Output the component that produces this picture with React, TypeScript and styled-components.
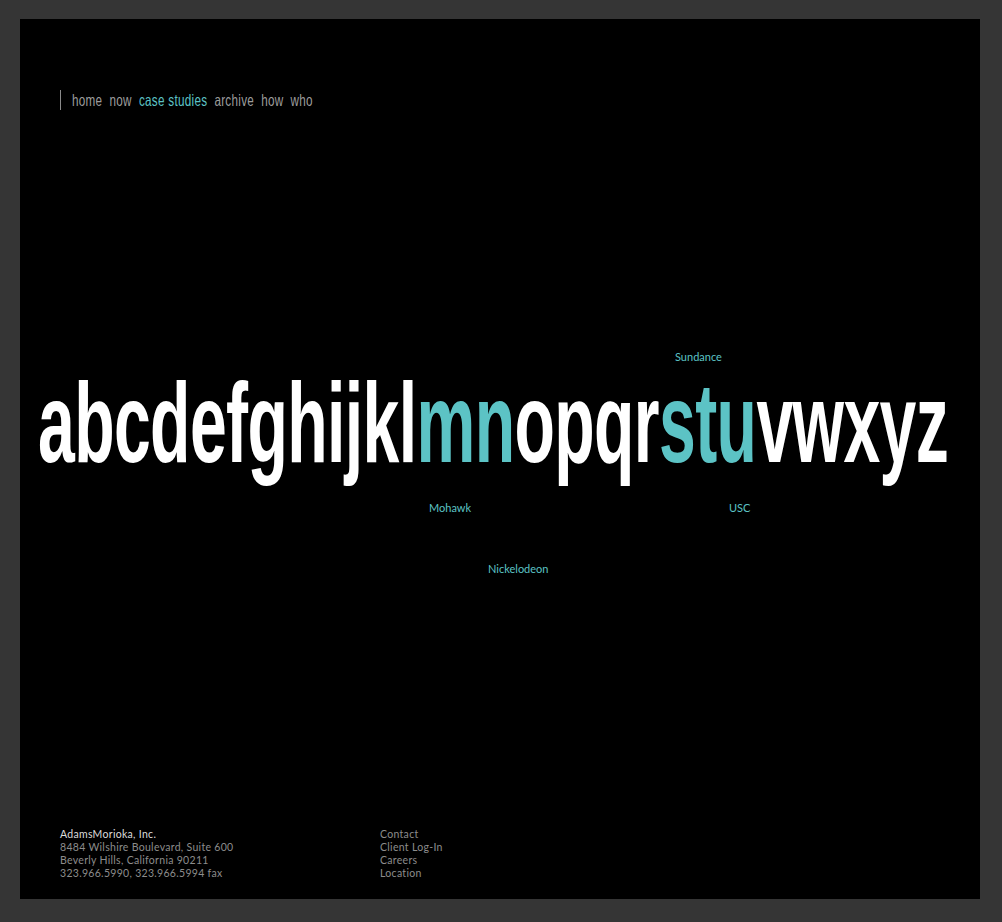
import * as React from "react";
import styled, { createGlobalStyle } from "styled-components";

const colors = {
  frame: "#353535",
  panel: "#000000",
  teal: "#5cc3c5",
  navGray: "#9d9d9d",
  white: "#ffffff",
  footLight: "#dcdcdc",
  footGray: "#8c8c8c",
};

const GlobalStyle = createGlobalStyle`
  html, body {
    margin: 0;
    padding: 0;
    background: ${colors.frame};
  }
  body {
    font-family: "Lato", "Liberation Sans", sans-serif;
  }
`;

const Frame = styled.div`
  padding: 19px 22px 23px 20px;
`;

const Panel = styled.div`
  /* the black sheet */
  background: ${colors.panel};
  width: 960px;
  height: 880px;
  display: flex;
  flex-direction: column;
  overflow: hidden;
`;

const Nav = styled.nav`
  display: flex;
  align-items: center;
  height: 20px;
  margin: 71px 0 0 40px;
`;

const NavBar = styled.span`
  width: 1px;
  height: 20px;
  background: #8a8a8a;
  margin-right: 11px;
`;

const NavLinks = styled.div`
  display: flex;
  align-items: center;
  gap: 10px;
  white-space: nowrap;
  transform-origin: left center;
`;

const NavLink = styled.a<{ active?: boolean }>`
  font-family: "Liberation Sans", sans-serif;
  font-size: 16.5px;
  line-height: 20px;
  letter-spacing: 0.4px;
  color: ${(p) => (p.active ? colors.teal : colors.navGray)};
  text-decoration: none;
  cursor: pointer;
`;

const Stage = styled.div`
  flex: 1;
  position: relative;
`;

const Alphabet = styled.div`
  margin: 268px 0 0 18px;
  height: 90px;
  line-height: 90px;
  white-space: nowrap;
`;

const Letters = styled.span`
  display: inline-block;
  font-family: "Liberation Sans Narrow", "Liberation Sans", sans-serif;
  font-weight: 700;
  font-size: 114px;
  letter-spacing: -1px;
  color: ${colors.white};
  transform-origin: left center;
`;

const Hi = styled.span`
  color: ${colors.teal};
`;

const Client = styled.a<{ x: number; y: number }>`
  position: absolute;
  left: ${(p) => p.x}px;
  top: ${(p) => p.y}px;
  font-family: "Lato", "Liberation Sans", sans-serif;
  font-size: 11px;
  line-height: 14px;
  color: ${colors.teal};
  text-decoration: none;
  cursor: pointer;
`;

const Footer = styled.footer`
  display: flex;
  padding: 0 0 19px 40px;
`;

const FootCol = styled.div<{ width?: number }>`
  width: ${(p) => (p.width ? `${p.width}px` : "auto")};
  display: flex;
  flex-direction: column;
`;

const FootLine = styled.span<{ strong?: boolean }>`
  font-family: "Lato", "Liberation Sans", sans-serif;
  font-size: 10.5px;
  line-height: 13px;
  letter-spacing: 0.3px;
  color: ${(p) => (p.strong ? colors.footLight : colors.footGray)};
  white-space: nowrap;
`;

const navItems = ["home", "now", "case studies", "archive", "how", "who"];

const clients = [
  { name: "Sundance", x: 655, y: 240 },
  { name: "Mohawk", x: 409, y: 391 },
  { name: "USC", x: 709, y: 391 },
  { name: "Nickelodeon", x: 468, y: 452 },
];

// squeeze an element horizontally until it spans the given width
function useFitWidth<T extends HTMLElement>(target: number) {
  const ref = React.useRef<T>(null);
  const [scale, setScale] = React.useState(1);
  React.useLayoutEffect(() => {
    if (ref.current) {
      const w = ref.current.offsetWidth;
      if (w > 0) setScale(target / w);
    }
  }, [target]);
  return [ref, scale] as const;
}

export default function App() {
  const [lettersRef, lettersScale] = useFitWidth<HTMLSpanElement>(910);
  const [navRef, navScale] = useFitWidth<HTMLDivElement>(241);

  return (
    <>
      <GlobalStyle />
      <Frame>
        <Panel>
          <Nav>
            <NavBar />
            <NavLinks ref={navRef} style={{ transform: `scaleX(${navScale})` }}>
              {navItems.map((item) => (
                <NavLink key={item} active={item === "case studies"}>
                  {item}
                </NavLink>
              ))}
            </NavLinks>
          </Nav>
          <Stage>
            <Alphabet>
              <Letters ref={lettersRef} style={{ transform: `scaleX(${lettersScale})` }}>
                abcdefghijkl<Hi>mn</Hi>opqr<Hi>stu</Hi>vwxyz
              </Letters>
            </Alphabet>
            {clients.map((c) => (
              <Client key={c.name} x={c.x} y={c.y}>
                {c.name}
              </Client>
            ))}
          </Stage>
          <Footer>
            <FootCol width={320}>
              <FootLine strong>AdamsMorioka, Inc.</FootLine>
              <FootLine>8484 Wilshire Boulevard, Suite 600</FootLine>
              <FootLine>Beverly Hills, California 90211</FootLine>
              <FootLine>323.966.5990, 323.966.5994 fax</FootLine>
            </FootCol>
            <FootCol>
              <FootLine>Contact</FootLine>
              <FootLine>Client Log-In</FootLine>
              <FootLine>Careers</FootLine>
              <FootLine>Location</FootLine>
            </FootCol>
          </Footer>
        </Panel>
      </Frame>
    </>
  );
}
